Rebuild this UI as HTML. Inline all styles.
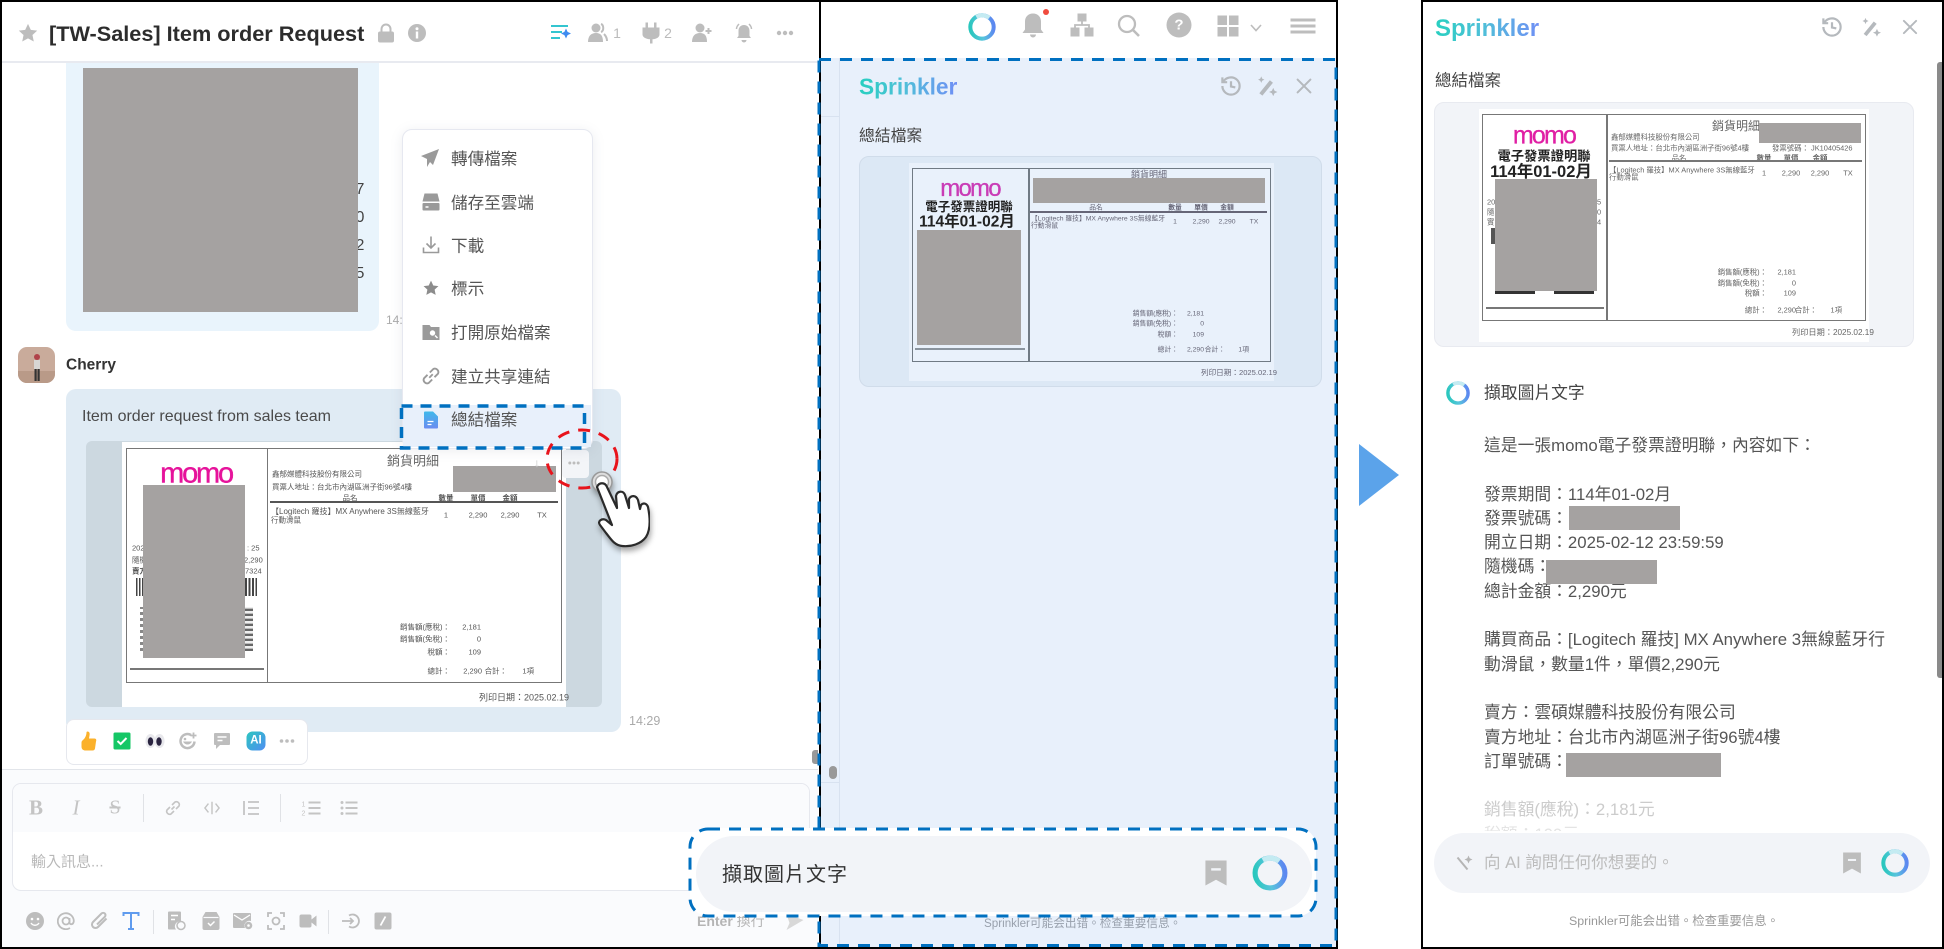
<!DOCTYPE html>
<html lang="zh-Hant">
<head>
<meta charset="utf-8">
<title>Sprinkler</title>
<style>
html,body{margin:0;padding:0;background:#fff}
body{position:relative;width:1944px;height:949px;overflow:hidden;font-family:"Liberation Sans","Noto Sans CJK TC",sans-serif;color:#444}
.a{position:absolute}
.c,.t,.r{position:absolute;white-space:nowrap;line-height:1}
.c{transform:translate(-50%,-50%)}
.t{transform:translateY(-50%);margin-top:1px}
.r{transform:translate(-100%,-50%);margin-top:1px}
svg.c{display:block}
.g{background:#a5a2a1;position:absolute}
.spr{background:linear-gradient(90deg,#27cfc0,#4fc0d8 45%,#6f8ff5);-webkit-background-clip:text;background-clip:text;color:transparent}
.mi{font-size:16.6px;color:#555}
.s1{font-size:7.5px;color:#555}
.s2{font-size:6.8px;color:#667}
.s3{font-size:7.4px;color:#666}
.ln{position:absolute;background:#777}
.gi{fill:#bdbdbd}
.gs{fill:none;stroke:#bdbdbd;stroke-width:2;stroke-linecap:round;stroke-linejoin:round}
</style>
</head>
<body>
<svg width="0" height="0" style="position:absolute">
<defs>
<linearGradient id="rg" x1="0" y1="0.7" x2="1" y2="0.55">
<stop offset="0" stop-color="#29c7bd"/><stop offset=".5" stop-color="#58c4dc"/><stop offset="1" stop-color="#5c88f0"/>
</linearGradient>
<linearGradient id="dg" x1="0" y1="0" x2="0" y2="1">
<stop offset="0" stop-color="#3fb8ea"/><stop offset="1" stop-color="#6b8cf0"/>
</linearGradient>
<symbol id="ring" viewBox="0 0 36 36">
<circle cx="18" cy="18" r="14.5" fill="none" stroke="url(#rg)" stroke-width="5"/>
<path d="M11 5.500A14.500 14.500 0 0 1 27 6.500" fill="none" stroke="#c4ebf2" stroke-width="5"/>
</symbol>
<symbol id="hist" viewBox="0 0 24 24">
<path d="M3 12a9 9 0 1 0 9-9 9.750 9.750 0 0 0-6.740 2.740L3 8" fill="none" stroke="#b5b9bd" stroke-width="2.300"/>
<path d="M3 3v5h5" fill="none" stroke="#b5b9bd" stroke-width="2.300"/>
<path d="M12 7v5.500l4.500 1" fill="none" stroke="#b5b9bd" stroke-width="2.300"/>
</symbol>
<symbol id="wand" viewBox="0 0 24 24">
<path d="M4 19.500L15 6l3.200 2.600L7.200 22z" fill="#b5b9bd"/>
<path d="M18.500 14l1.400 3 3 1.200-3 1.300-1.400 3-1.400-3-3-1.300 3-1.200zM6 2l1 2.300L9.300 5.400 7 6.500 6 8.800 5 6.500 2.700 5.400 5 4.300z" fill="#b5b9bd"/>
</symbol>
<symbol id="xx" viewBox="0 0 24 24">
<path d="M5 5l14 14M19 5L5 19" fill="none" stroke="#b5b9bd" stroke-width="2.200" stroke-linecap="round"/>
</symbol>
<symbol id="book" viewBox="0 0 22 26">
<path d="M0 0h22v26l-11-6-11 6z" fill="#bdbdbd"/><rect x="6" y="8" width="10" height="2.500" fill="#f2f4f8"/>
</symbol>
</defs>
</svg>

<!-- LEFT CHAT PANEL -->
<div class="a" style="left:0;top:0;width:820px;height:949px;background:#fff"></div>
<svg class="c" style="left:28px;top:33px" width="21" height="21" viewBox="0 0 24 24"><path class="gi" d="M12 1.500l3.200 6.900 7.300.9-5.400 5 1.500 7.400L12 18.100l-6.600 3.600 1.500-7.400-5.400-5 7.300-.9z"/></svg>
<div class="t" style="left:49px;top:33px;font-size:21.700px;font-weight:bold;color:#2c2c2c">[TW-Sales] Item order Request</div>
<svg class="c" style="left:386px;top:33px" width="18" height="20" viewBox="0 0 18 20"><path d="M4.500 9V6a4.500 4.500 0 0 1 9 0v3" fill="none" stroke="#bdbdbd" stroke-width="2"/><rect x="1" y="8.500" width="16" height="11" rx="2" fill="#bdbdbd"/></svg>
<svg class="c" style="left:417px;top:33px" width="18" height="18" viewBox="0 0 18 18"><circle cx="9" cy="9" r="9" fill="#bdbdbd"/><rect x="7.800" y="7.500" width="2.400" height="7" fill="#fff"/><circle cx="9" cy="4.800" r="1.500" fill="#fff"/></svg>
<svg class="c" style="left:561px;top:33px" width="20" height="18" viewBox="0 0 20 18"><rect x="0" y="1" width="17" height="2" fill="#33c5d0"/><rect x="0" y="7" width="11" height="2" fill="#33c5d0"/><rect x="0" y="13" width="9" height="2" fill="#33c5d0"/><path d="M15 4.500l1.600 3.400 3.400 1.600-3.400 1.600L15 14.500l-1.600-3.400L10 9.500l3.400-1.600z" fill="#3f8cf0"/></svg>
<svg class="c" style="left:598px;top:33px" width="20" height="20" viewBox="0 0 20 20"><circle cx="8" cy="5" r="4.500" class="gi"/><path class="gi" d="M0 19c0-6 3-9 8-9s7 3 7 9z"/><path d="M13 1c3 1 3 7 0 8M16 11c2 2 3 4 3 7" fill="none" stroke="#bdbdbd" stroke-width="2"/></svg>
<div class="c" style="left:617px;top:33px;font-size:14px;color:#bbb">1</div>
<svg class="c" style="left:651px;top:33px" width="17" height="21" viewBox="0 0 17 21"><path class="gi" d="M3 0h2.500v5h6V0H14v5h3v7c0 2.500-2.500 4.500-7 4.800V21H7.500v-4.200C3 16.500 0 14.500 0 12V5h3z"/></svg>
<div class="c" style="left:668px;top:33px;font-size:14px;color:#bbb">2</div>
<svg class="c" style="left:702px;top:33px" width="20" height="20" viewBox="0 0 20 20"><circle cx="8" cy="5" r="4.500" class="gi"/><path class="gi" d="M0 19c0-6 3-9 8-9s7 3 7 9z"/><path d="M16.500 5v6M13.500 8h6" stroke="#bdbdbd" stroke-width="2"/></svg>
<svg class="c" style="left:744px;top:33px" width="21" height="20" viewBox="0 0 21 20"><path class="gi" d="M10.500 2c3.500 0 5.500 2.500 5.500 6v5l1.500 2H3.500L5 13V8c0-3.500 2-6 5.500-6zM8 17h5a2.500 2.500 0 0 1-5 0z"/><path d="M3 6c0-2 1-3.500 2.500-5M18 6c0-2-1-3.500-2.500-5" fill="none" stroke="#bdbdbd" stroke-width="1.500"/></svg>
<svg class="c" style="left:785px;top:33px" width="17" height="5" viewBox="0 0 17 5"><circle cx="2.500" cy="2.500" r="2.200" class="gi"/><circle cx="8.500" cy="2.500" r="2.200" class="gi"/><circle cx="14.500" cy="2.500" r="2.200" class="gi"/></svg>
<div class="a" style="left:2px;top:61px;width:816px;height:2px;background:#e8eaf0"></div>

<!-- first bubble -->
<div class="a" style="left:66px;top:63px;width:313px;height:268px;background:#e9f4fc;border-radius:0 0 10px 10px"></div>
<div class="c" style="left:360px;top:190px;font-size:16px;color:#444">7</div>
<div class="c" style="left:360px;top:218px;font-size:16px;color:#444">0</div>
<div class="c" style="left:360px;top:246px;font-size:16px;color:#444">2</div>
<div class="c" style="left:360px;top:274px;font-size:16px;color:#444">5</div>
<div class="g" style="left:83px;top:68px;width:275px;height:244px"></div>
<div class="t" style="left:386px;top:319px;font-size:12px;color:#aaa">14:</div>

<!-- Cherry -->
<svg class="a" style="left:18px;top:347px;border-radius:9px" width="37" height="36" viewBox="0 0 37 36"><rect width="37" height="36" fill="#c9ab9b"/><rect y="24" width="37" height="12" fill="#b99a88"/><circle cx="19" cy="10" r="3" fill="#b0424a"/><rect x="16" y="13" width="6" height="9" fill="#d8d6d4"/><rect x="16.500" y="22" width="2.200" height="12" fill="#333"/><rect x="19.500" y="22" width="2.200" height="12" fill="#333"/></svg>
<div class="t" style="left:66px;top:364px;font-size:15.500px;font-weight:bold;color:#333">Cherry</div>

<!-- second bubble -->
<div class="a" style="left:66px;top:389px;width:555px;height:343px;background:#e0ebf4;border-radius:10px"></div>
<div class="t" style="left:82px;top:416px;font-size:16px;color:#4a4a4a">Item order request from sales team</div>
<div class="a" style="left:86px;top:441px;width:516px;height:266px;background:#ccd8e0;border-radius:6px"></div>
<div class="a" style="left:122px;top:442px;width:444px;height:265px;background:#fff"></div>
<div class="a" style="left:126px;top:448px;width:434px;height:233px;border:1.500px solid #777"></div>
<div class="ln" style="left:267px;top:448px;width:1px;height:234px"></div>
<div class="c" style="left:196px;top:474px;font-size:29px;letter-spacing:-2.200px;color:#e6139b;-webkit-text-stroke:.4px #e6139b">momo</div>
<div class="c" style="left:413px;top:461px;font-size:13px;color:#666">銷貨明細</div>
<div class="t s1" style="left:272px;top:473px">鑫郁媒體科技股份有限公司</div>
<div class="t s1" style="left:272px;top:486px">買票人地址：台北市內湖區洲子街96號4樓</div>
<div class="c s1" style="left:350px;top:498px">品名</div>
<div class="c s1" style="left:446px;top:498px;font-weight:bold">數量</div>
<div class="c s1" style="left:478px;top:498px;font-weight:bold">單價</div>
<div class="c s1" style="left:510px;top:498px;font-weight:bold">金額</div>
<div class="ln" style="left:270px;top:501px;width:288px;height:1.500px;background:#555"></div>
<div class="t s1" style="left:271px;top:511px;font-size:8px">【Logitech 羅技】MX Anywhere 3S無線藍牙</div>
<div class="t s1" style="left:271px;top:519px">行動滑鼠</div>
<div class="c s1" style="left:446px;top:515px">1</div>
<div class="c s1" style="left:478px;top:515px">2,290</div>
<div class="c s1" style="left:510px;top:515px">2,290</div>
<div class="c s1" style="left:542px;top:515px">TX</div>
<div class="r s1" style="left:450px;top:626px">銷售額(應稅)：</div><div class="r s1" style="left:481px;top:626px">2,181</div>
<div class="r s1" style="left:450px;top:638px">銷售額(免稅)：</div><div class="r s1" style="left:481px;top:638px">0</div>
<div class="r s1" style="left:450px;top:651px">稅額：</div><div class="r s1" style="left:481px;top:651px">109</div>
<div class="r s1" style="left:450px;top:670px">總計：</div><div class="r s1" style="left:482px;top:670px">2,290</div><div class="r s1" style="left:507px;top:670px">合計：</div><div class="r s1" style="left:534px;top:670px">1項</div>
<div class="t s1" style="left:479px;top:697px;font-size:9px">列印日期：2025.02.19</div>
<div class="t s1" style="left:132px;top:547px">2025</div><div class="t s1" style="left:247px;top:547px">: 25</div>
<div class="t s1" style="left:132px;top:559px">隨機</div><div class="t s1" style="left:244px;top:559px">2,290</div>
<div class="t s1" style="left:132px;top:570px;font-weight:bold">賣方</div><div class="t s1" style="left:245px;top:570px">7324</div>
<div class="a" style="left:136px;top:578px;width:7px;height:18px;background:repeating-linear-gradient(90deg,#444 0 1.500px,#fff 1.500px 3px)"></div>
<div class="a" style="left:245px;top:578px;width:12px;height:18px;background:repeating-linear-gradient(90deg,#444 0 2px,#fff 2px 3.500px)"></div>
<div class="a" style="left:245px;top:607px;width:8px;height:44px;background:repeating-linear-gradient(0deg,#666 0 2px,#bbb 2px 3px,#eee 3px 5px)"></div>
<div class="a" style="left:140px;top:607px;width:3px;height:44px;background:repeating-linear-gradient(0deg,#888 0 3px,#fff 3px 6px)"></div>
<div class="ln" style="left:130px;top:668px;width:134px;height:1.500px"></div>
<div class="g" style="left:143px;top:485px;width:102px;height:173px"></div>
<div class="g" style="left:453px;top:466px;width:103px;height:26px"></div>
<div class="c" style="left:537px;top:463px;font-size:12px;color:#bbb">↓</div>
<div class="a" style="left:562px;top:450px;width:27px;height:28px;background:#f3f5f8;border-radius:4px"></div>
<svg class="c" style="left:574px;top:463px" width="12" height="4" viewBox="0 0 12 4"><circle cx="1.800" cy="2" r="1.500" class="gi"/><circle cx="6" cy="2" r="1.500" class="gi"/><circle cx="10.200" cy="2" r="1.500" class="gi"/></svg>
<div class="t" style="left:629px;top:720px;font-size:12.500px;color:#aaa">14:29</div>

<!-- reaction bar -->
<div class="a" style="left:66px;top:719px;width:240px;height:44px;background:#fff;border:1px solid #e6e8ee;border-radius:8px"></div>
<svg class="c" style="left:89px;top:741px" width="15" height="19" viewBox="0 0 15 19"><path fill="#fbb12b" d="M6 0c2 0 2.500 2 2 4L7.500 7H13c2 0 2 2 1.500 3l-1 7c-.3 1.200-1 2-2.500 2H4c-2 0-4-1-4-4v-4c0-1.500 1-2 2.500-3.500C4 6 5 3 5 1c0-.6.400-1 1-1z"/></svg>
<svg class="c" style="left:122px;top:741px" width="17" height="17" viewBox="0 0 17 17"><rect width="17" height="17" rx="1.500" fill="#15c766"/><path d="M4 8.500l3.200 3L13 5.500" fill="none" stroke="#fff" stroke-width="2"/></svg>
<svg class="c" style="left:155px;top:741px" width="19" height="15" viewBox="0 0 19 15"><ellipse cx="5" cy="7.500" rx="5" ry="7" fill="#e8e8ec"/><ellipse cx="14" cy="7.500" rx="5" ry="7" fill="#e8e8ec"/><ellipse cx="5" cy="8" rx="2.700" ry="4.300" fill="#2a2440"/><ellipse cx="13.500" cy="8" rx="2.700" ry="4.300" fill="#2a2440"/></svg>
<svg class="c" style="left:188px;top:741px" width="18" height="17" viewBox="0 0 18 17"><path d="M12 2.500A7 7 0 1 0 15.500 9" fill="none" stroke="#bdbdbd" stroke-width="2.500"/><path d="M4 9c2 4 7 4 9 0z" class="gi"/><circle cx="6" cy="6.500" r="1.300" class="gi"/><path d="M14.500 0v6M11.500 3h6" stroke="#bdbdbd" stroke-width="1.800"/></svg>
<svg class="c" style="left:222px;top:741px" width="16" height="16" viewBox="0 0 16 16"><path class="gi" d="M1 0h14a1 1 0 0 1 1 1v10a1 1 0 0 1-1 1H6l-4 4v-4H1a1 1 0 0 1-1-1V1a1 1 0 0 1 1-1z"/><path d="M3.500 4h9M3.500 7.500h5" stroke="#fff" stroke-width="1.500"/></svg>
<div class="c" style="left:256px;top:741px;width:19px;height:19px;border-radius:6px;background:linear-gradient(135deg,#2cc6c0,#4f8df2);color:#fff;font-size:11.500px;font-weight:bold;line-height:19px;text-align:center">AI</div>
<svg class="c" style="left:287px;top:741px" width="15" height="4" viewBox="0 0 15 4"><circle cx="2" cy="2" r="1.800" class="gi"/><circle cx="7.500" cy="2" r="1.800" class="gi"/><circle cx="13" cy="2" r="1.800" class="gi"/></svg>

<!-- input area -->
<div class="a" style="left:2px;top:769px;width:816px;height:178px;background:#fafbfd;border-top:1.500px solid #e2e5ea;box-sizing:border-box"></div>
<div class="a" style="left:12px;top:783px;width:798px;height:108px;background:#fff;border:1.500px solid #e6e8ee;border-radius:9px;overflow:hidden;box-sizing:border-box"><div style="height:48px;background:#fafbfd"></div></div>
<div class="c" style="left:36px;top:808px;font:bold 21px 'Liberation Serif',serif;color:#c4c4c4">B</div>
<div class="c" style="left:76px;top:808px;font:italic 21px 'Liberation Serif',serif;color:#c4c4c4">I</div>
<div class="c" style="left:115px;top:808px;font:20px 'Liberation Serif',serif;color:#c4c4c4;text-decoration:line-through">S</div>
<div class="a" style="left:143px;top:794px;width:1px;height:28px;background:#e0e2e6"></div>
<svg class="c" style="left:173px;top:808px" width="18" height="18" viewBox="0 0 18 18"><path d="M7.500 10.500l3-3M6 8l-3 3a3 3 0 0 0 4 4l3-3M8 6l3-3a3 3 0 0 1 4 4l-3 3" fill="none" stroke="#c4c4c4" stroke-width="1.600"/></svg>
<svg class="c" style="left:212px;top:808px" width="16" height="15" viewBox="0 0 18 16"><path d="M5 3L1 8l4 5M13 3l4 5-4 5M9 1v14" fill="none" stroke="#c4c4c4" stroke-width="1.600"/></svg>
<svg class="c" style="left:251px;top:808px" width="16" height="14" viewBox="0 0 16 14"><path d="M1 0v14M5 1h11M5 7h11M5 13h11" stroke="#c4c4c4" stroke-width="1.800"/></svg>
<div class="a" style="left:280px;top:794px;width:1px;height:28px;background:#e0e2e6"></div>
<svg class="c" style="left:311px;top:808px" width="19" height="15" viewBox="0 0 19 15"><path d="M7 2h12M7 7.500h12M7 13h12" stroke="#c4c4c4" stroke-width="2"/><text x="0" y="6" font-size="7" fill="#c4c4c4" font-family="Liberation Sans">1</text><text x="0" y="15" font-size="7" fill="#c4c4c4" font-family="Liberation Sans">2</text></svg>
<svg class="c" style="left:349px;top:808px" width="17" height="14" viewBox="0 0 17 14"><path d="M5 1.500h12M5 7h12M5 12.500h12" stroke="#c4c4c4" stroke-width="2"/><circle cx="1.500" cy="1.500" r="1.500" fill="#c4c4c4"/><circle cx="1.500" cy="7" r="1.500" fill="#c4c4c4"/><circle cx="1.500" cy="12.500" r="1.500" fill="#c4c4c4"/></svg>
<div class="t" style="left:31px;top:861px;font-size:15px;color:#b8b8b8">輸入訊息...</div>

<svg class="c" style="left:35px;top:921px" width="18" height="18" viewBox="0 0 18 18"><circle cx="9" cy="9" r="9" class="gi"/><circle cx="6" cy="7" r="1.300" fill="#fff"/><circle cx="12" cy="7" r="1.300" fill="#fff"/><path d="M5 11c2 3 6 3 8 0" fill="none" stroke="#fff" stroke-width="1.400"/></svg>
<svg class="c" style="left:66px;top:921px" width="18" height="18" viewBox="0 0 18 18"><circle cx="9" cy="9" r="3.500" fill="none" stroke="#bdbdbd" stroke-width="1.800"/><path d="M12.500 6v4.500c0 2.500 4 2.500 4.300-1.500A8 8 0 1 0 13 16" fill="none" stroke="#bdbdbd" stroke-width="1.800"/></svg>
<svg class="c" style="left:99px;top:921px" width="19" height="19" viewBox="0 0 19 19"><path d="M17 7l-8.500 8.500a3.500 3.500 0 0 1-5-5L12 2a2.300 2.300 0 0 1 3.300 3.300L7.500 13" fill="none" stroke="#bdbdbd" stroke-width="2"/></svg>
<svg class="c" style="left:131px;top:921px" width="17" height="18" viewBox="0 0 17 18"><path d="M1 4V1h15v3M8.500 1v16M5.500 17h6" fill="none" stroke="#5f9bee" stroke-width="2"/></svg>
<div class="a" style="left:153px;top:910px;width:1px;height:24px;background:#e0e2e6"></div>
<svg class="c" style="left:177px;top:921px" width="18" height="19" viewBox="0 0 18 19"><path class="gi" d="M1 0h11a1 1 0 0 1 1 1v9a5 5 0 0 0-5 8H1a1 1 0 0 1-1-1V1a1 1 0 0 1 1-1z"/><path d="M3 4h7M3 8h4" stroke="#fff" stroke-width="1.500"/><circle cx="13" cy="14" r="4" fill="none" stroke="#bdbdbd" stroke-width="1.500"/></svg>
<svg class="c" style="left:211px;top:921px" width="17" height="18" viewBox="0 0 17 18"><path class="gi" d="M3 0h11l3 5v11a2 2 0 0 1-2 2H2a2 2 0 0 1-2-2V5z"/><path d="M1 5.500h15" stroke="#fafbfd" stroke-width="1.200"/><path d="M5.500 11l2.500 2.500 4-4" fill="none" stroke="#fff" stroke-width="1.500"/></svg>
<svg class="c" style="left:243px;top:921px" width="20" height="18" viewBox="0 0 20 18"><path class="gi" d="M1 1h16a1 1 0 0 1 1 1v7a5 5 0 0 0-6 7H1a1 1 0 0 1-1-1V2a1 1 0 0 1 1-1z"/><path d="M1 3l8 5 8-5" fill="none" stroke="#fff" stroke-width="1.300"/><circle cx="15.500" cy="13.500" r="3.800" class="gi"/><circle cx="15.500" cy="13.500" r="1.300" fill="#fff"/></svg>
<svg class="c" style="left:276px;top:921px" width="18" height="18" viewBox="0 0 18 18"><path d="M1 5V1h4M13 1h4v4M17 13v4h-4M5 17H1v-4" fill="none" stroke="#bdbdbd" stroke-width="1.800"/><circle cx="9" cy="9" r="3.500" fill="none" stroke="#bdbdbd" stroke-width="1.800"/></svg>
<svg class="c" style="left:308px;top:921px" width="17" height="13" viewBox="0 0 17 13"><rect y="0" width="12" height="13" rx="2" class="gi"/><path class="gi" d="M12 5l5-4v11l-5-4z"/></svg>
<div class="a" style="left:328px;top:910px;width:1px;height:24px;background:#e0e2e6"></div>
<svg class="c" style="left:351px;top:921px" width="18" height="16" viewBox="0 0 18 16"><path d="M0 8h11M8 5l3 3-3 3" fill="none" stroke="#bdbdbd" stroke-width="1.800"/><path d="M7 2.500a6.500 6.500 0 1 1 0 11" fill="none" stroke="#bdbdbd" stroke-width="1.800"/></svg>
<svg class="c" style="left:383px;top:921px" width="17" height="17" viewBox="0 0 17 17"><rect width="17" height="17" rx="2" class="gi"/><path d="M11 4L6 13" stroke="#fff" stroke-width="1.800"/></svg>
<div class="t" style="left:697px;top:920px;font-size:14px;color:#b5b5b5"><b>Enter</b> 換行</div>
<svg class="c" style="left:795px;top:922px" width="17" height="16" viewBox="0 0 17 16"><path d="M0 0l17 6L0 16l3-7z" fill="#d8d8d8"/></svg>

<!-- TOP BAR of middle -->
<div class="a" style="left:820px;top:2px;width:516px;height:56px;background:#fff"></div>
<svg class="c" style="left:982px;top:27px" width="29" height="29"><use href="#ring"/></svg>
<svg class="c" style="left:1033px;top:26px" width="21" height="25" viewBox="0 0 21 25"><path d="M10.500 0c5 0 8 3.500 8 8v8l2.500 3.500H0L2.500 16V8c0-4.500 3-8 8-8zM7.500 21h6a3 3 0 0 1-6 0z" fill="#bdbdbd"/></svg>
<div class="a" style="left:1043px;top:9px;width:6px;height:6px;background:#f04b3e;border-radius:50%"></div>
<svg class="c" style="left:1082px;top:25px" width="23" height="23" viewBox="0 0 23 23"><rect x="7" y="0" width="9" height="8" class="gi"/><rect x="0" y="14" width="9" height="9" class="gi"/><rect x="14" y="14" width="9" height="9" class="gi"/><path d="M11.500 8v4M4.500 14v-2.500h14V14" fill="none" stroke="#bdbdbd" stroke-width="1.800"/></svg>
<svg class="c" style="left:1129px;top:26px" width="23" height="23" viewBox="0 0 23 23"><circle cx="9.500" cy="9.500" r="8" fill="none" stroke="#bdbdbd" stroke-width="2.300"/><path d="M15.500 15.500l6 6" stroke="#bdbdbd" stroke-width="2.600"/></svg>
<div class="c" style="left:1179px;top:25px;width:25px;height:25px;border-radius:50%;background:#bdbdbd;color:#fff;font-size:15px;font-weight:bold;line-height:25px;text-align:center">?</div>
<svg class="c" style="left:1228px;top:26px" width="21" height="21" viewBox="0 0 21 21"><rect width="9.500" height="9.500" class="gi"/><rect x="11.500" width="9.500" height="9.500" class="gi"/><rect y="11.500" width="9.500" height="9.500" class="gi"/><rect x="11.500" y="11.500" width="9.500" height="9.500" class="gi"/></svg>
<svg class="c" style="left:1256px;top:28px" width="12" height="8" viewBox="0 0 12 8"><path d="M1 1l5 5.500L11 1" fill="none" stroke="#bdbdbd" stroke-width="1.600"/></svg>
<svg class="c" style="left:1303px;top:26px" width="25" height="16" viewBox="0 0 25 16"><path d="M0 2h25M0 8h25M0 14h25" stroke="#bdbdbd" stroke-width="3"/></svg>

<!-- BLUE PANEL -->
<div class="a" style="left:819px;top:58px;width:517px;height:889px;background:#e8f0fb"></div>
<div class="a" style="left:839px;top:58px;width:1px;height:889px;background:#d8e2f0"></div>
<div class="a" style="left:820px;top:116px;width:19px;height:1px;background:#d8e2f0"></div>
<div class="a" style="left:820px;top:782px;width:19px;height:1px;background:#d8e2f0"></div>
<div class="a" style="left:829px;top:766px;width:8px;height:13px;background:#999;border-radius:4px"></div>
<div class="a" style="left:812px;top:750px;width:6px;height:14px;background:#999;border-radius:3px 0 0 3px"></div>
<div class="t spr" style="left:859px;top:86px;font-size:22.700px;font-weight:bold">Sprinkler</div>
<svg class="c" style="left:1231px;top:86px" width="23" height="23"><use href="#hist"/></svg>
<svg class="c" style="left:1267px;top:86px" width="23" height="23"><use href="#wand"/></svg>
<svg class="c" style="left:1304px;top:86px" width="22" height="22"><use href="#xx"/></svg>
<div class="t" style="left:859px;top:136px;font-size:15.800px;color:#444">總結檔案</div>
<div class="a" style="left:859px;top:156px;width:463px;height:231px;background:#dce8f5;border:1px solid #d0dcea;border-radius:10px;box-sizing:border-box"></div>
<div class="a" style="left:909px;top:163px;width:365px;height:218px;background:#e9f1fb"></div>
<div class="a" style="left:912px;top:168px;width:357px;height:192px;border:1.500px solid #707a84"></div>
<div class="ln" style="left:1028px;top:168px;width:1.500px;height:193px;background:#707a84"></div>
<div class="c" style="left:970px;top:189px;font-size:24px;letter-spacing:-1.800px;color:#c93cb6;-webkit-text-stroke:.3px #c93cb6">momo</div>
<div class="c" style="left:969px;top:207px;font-size:12.500px;font-weight:bold;color:#222">電子發票證明聯</div>
<div class="c" style="left:967px;top:222px;font-size:15.500px;font-weight:bold;color:#222">114年01-02月</div>
<div class="c s2" style="left:1149px;top:175px;font-size:9px">銷貨明細</div>
<div class="c s2" style="left:1096px;top:209px">品名</div>
<div class="c s2" style="left:1175px;top:209px;font-weight:bold">數量</div>
<div class="c s2" style="left:1201px;top:209px;font-weight:bold">單價</div>
<div class="c s2" style="left:1227px;top:209px;font-weight:bold">金額</div>
<div class="ln" style="left:1030px;top:211px;width:237px;height:1.500px;background:#667"></div>
<div class="t s2" style="left:1031px;top:219px">【Logitech 羅技】MX Anywhere 3S無線藍牙</div>
<div class="t s2" style="left:1031px;top:226px">行動滑鼠</div>
<div class="c s2" style="left:1175px;top:223px">1</div>
<div class="c s2" style="left:1201px;top:223px">2,290</div>
<div class="c s2" style="left:1227px;top:223px">2,290</div>
<div class="c s2" style="left:1254px;top:223px">TX</div>
<div class="r s2" style="left:1178px;top:314px">銷售額(應稅)：</div><div class="r s2" style="left:1204px;top:314px">2,181</div>
<div class="r s2" style="left:1178px;top:324px">銷售額(免稅)：</div><div class="r s2" style="left:1204px;top:324px">0</div>
<div class="r s2" style="left:1178px;top:335px">稅額：</div><div class="r s2" style="left:1204px;top:335px">109</div>
<div class="r s2" style="left:1178px;top:350px">總計：</div><div class="r s2" style="left:1204px;top:350px">2,290</div><div class="r s2" style="left:1225px;top:350px">合計：</div><div class="r s2" style="left:1249px;top:350px">1項</div>
<div class="t s2" style="left:1201px;top:372px;font-size:7.600px">列印日期：2025.02.19</div>
<div class="ln" style="left:915px;top:348px;width:110px;height:1.500px;background:#8a949e"></div>
<div class="g" style="left:917px;top:230px;width:104px;height:115px"></div>
<div class="g" style="left:1033px;top:178px;width:232px;height:25px"></div>
<div class="t" style="left:984px;top:923px;font-size:11.650px;color:#98a0ac">Sprinkler可能会出错。检查重要信息。</div>

<!-- blue dashed panel border + black frame -->
<div class="a" style="left:0;top:0;width:1338px;height:2px;background:#000"></div>
<div class="a" style="left:0;top:947px;width:1338px;height:2px;background:#000"></div>
<div class="a" style="left:0;top:0;width:2px;height:949px;background:#000"></div>
<div class="a" style="left:819px;top:0;width:2px;height:949px;background:#000"></div>
<div class="a" style="left:1336px;top:0;width:2px;height:949px;background:#000"></div>
<svg class="a" style="left:0;top:0" width="1944" height="949"><rect x="819" y="59.500" width="517" height="886" fill="none" stroke="#0070c0" stroke-width="3" stroke-dasharray="12 9"/></svg>

<!-- MENU -->
<div class="a" style="left:402px;top:129px;width:191px;height:320px;background:#fff;border:1.500px solid #e6e8f0;border-radius:10px;box-sizing:border-box;box-shadow:0 2px 12px rgba(120,130,150,.14);overflow:hidden"></div>
<svg class="c" style="left:430px;top:158px" width="18" height="18" viewBox="0 0 18 18"><path d="M18 0L0 7l6 3v8l3-5 3 3z" fill="#9a9a9a"/></svg>
<div class="t mi" style="left:451px;top:159px">轉傳檔案</div>
<svg class="c" style="left:431px;top:202px" width="17" height="17" viewBox="0 0 17 17"><path d="M2 0h13l2 8H0z" fill="#9a9a9a"/><rect y="9.500" width="17" height="7.500" rx="1" fill="#9a9a9a"/><path d="M3 13.500h3" stroke="#fff" stroke-width="1.500"/></svg>
<div class="t mi" style="left:451px;top:203px">儲存至雲端</div>
<svg class="c" style="left:431px;top:245px" width="17" height="17" viewBox="0 0 17 17"><path d="M8.500 0v11M4 7l4.500 4.500L13 7M1 11v5h15v-5" fill="none" stroke="#9a9a9a" stroke-width="1.600"/></svg>
<div class="t mi" style="left:451px;top:246px">下載</div>
<svg class="c" style="left:431px;top:288px" width="17" height="17" viewBox="0 0 24 24"><path fill="#8c8c8c" d="M12 1.500l3.200 6.900 7.300.9-5.400 5 1.500 7.400L12 18.100l-6.600 3.600 1.500-7.400-5.400-5 7.300-.9z"/></svg>
<div class="t mi" style="left:451px;top:289px">標示</div>
<svg class="c" style="left:431px;top:332px" width="17" height="16" viewBox="0 0 17 16"><path d="M0 1h7l1.500 2H17v13H0z" fill="#9a9a9a"/><circle cx="10" cy="9" r="3.300" fill="#fff" stroke="#9a9a9a" stroke-width="1.200"/><path d="M12.500 11.500l2.500 2.500" stroke="#fff" stroke-width="1.500"/></svg>
<div class="t mi" style="left:451px;top:333px">打開原始檔案</div>
<svg class="c" style="left:431px;top:376px" width="22" height="21" viewBox="0 0 18 18"><path d="M7.500 10.500l3-3M6 8l-3 3a3 3 0 0 0 4 4l3-3M8 6l3-3a3 3 0 0 1 4 4l-3 3" fill="none" stroke="#9a9a9a" stroke-width="1.600"/></svg>
<div class="t mi" style="left:451px;top:377px">建立共享連結</div>
<div class="a" style="left:403px;top:405px;width:188px;height:42px;background:#e8f0fb"></div>
<svg class="c" style="left:431px;top:420px" width="14" height="17" viewBox="0 0 14 17"><path d="M1 0h8l5 5v11a1 1 0 0 1-1 1H1a1 1 0 0 1-1-1V1a1 1 0 0 1 1-1z" fill="url(#dg)"/><path d="M3.500 10h6M3.500 13h4" stroke="#fff" stroke-width="1.200"/></svg>
<div class="t mi" style="left:451px;top:420px">總結檔案</div>
<svg class="a" style="left:0;top:0" width="1944" height="949"><rect x="401.500" y="406" width="183" height="42" fill="none" stroke="#0070c0" stroke-width="3.500" stroke-dasharray="11 8"/>
<ellipse cx="582" cy="459" rx="35" ry="29" fill="none" stroke="#e8141c" stroke-width="3" stroke-dasharray="12 9"/></svg>
<!-- hand -->
<svg class="a" style="left:520px;top:392px;filter:drop-shadow(1px 4px 3px rgba(0,0,0,.35))" width="130" height="160" viewBox="0 0 130 160">
<circle cx="82" cy="90" r="10" fill="#ddd" stroke="#999" stroke-width="1.500"/><circle cx="82" cy="90" r="6.500" fill="#fff" stroke="#aaa" stroke-width="1.500"/>
<path d="M77 95c2-5 8-5 10 0l10 21-1-12c1-5 7-6 9-1l4 13v-9c2-4 7-4 9 1l2 9 1-4c3-3 6-1 7 2 2 10 3 22-2 30-5 7-15 10-24 9-8-1-11-7-16-13l-6-8c-3-4 2-7 6-5l6 5z" fill="#fff" stroke="#2a2a2a" stroke-width="2.200" stroke-linejoin="round"/>
</svg>

<!-- OVERLAY INPUT -->
<div class="a" style="left:690px;top:828px;width:626px;height:88px;background:#fff;border-radius:18px"></div>
<div class="a" style="left:696px;top:836px;width:616px;height:76px;background:#f2f4f8;border-radius:38px"></div>
<svg class="a" style="left:0;top:0" width="1944" height="949"><rect x="690" y="829" width="626" height="87" rx="18" fill="none" stroke="#0070c0" stroke-width="3" stroke-dasharray="12 9"/></svg>
<div class="t" style="left:722px;top:874px;font-size:20px;letter-spacing:1px;color:#333">擷取圖片文字</div>
<svg class="c" style="left:1216px;top:873px" width="22" height="25"><use href="#book"/></svg>
<svg class="c" style="left:1270px;top:873px" width="37" height="37"><use href="#ring"/></svg>

<!-- ARROW -->
<svg class="a" style="left:1359px;top:444px" width="40" height="62" viewBox="0 0 40 62"><path d="M0 0l40 31L0 62z" fill="#5ba3ea"/></svg>

<!-- RIGHT PANEL -->
<div class="a" style="left:1421px;top:0;width:523px;height:949px;border:2px solid #000;box-sizing:border-box;background:#fff"></div>
<div class="a" style="left:1937px;top:62px;width:5px;height:616px;background:#8a8a8a;border-radius:3px 0 0 3px"></div>
<div class="t spr" style="left:1435px;top:28px;font-size:24px;font-weight:bold">Sprinkler</div>
<svg class="c" style="left:1832px;top:27px" width="23" height="23"><use href="#hist"/></svg>
<svg class="c" style="left:1871px;top:27px" width="22" height="22"><use href="#wand"/></svg>
<svg class="c" style="left:1910px;top:27px" width="21" height="21"><use href="#xx"/></svg>
<div class="t" style="left:1435px;top:80px;font-size:16.500px;color:#444">總結檔案</div>
<div class="a" style="left:1434px;top:102px;width:480px;height:245px;background:#f2f4f8;border:1px solid #e8eaf0;border-radius:10px;box-sizing:border-box"></div>
<div class="a" style="left:1479px;top:109px;width:390px;height:233px;background:#fff"></div>
<div class="a" style="left:1482px;top:114px;width:382px;height:205px;border:1.500px solid #777"></div>
<div class="ln" style="left:1606px;top:114px;width:1.500px;height:206px"></div>
<div class="c" style="left:1544px;top:136px;font-size:25px;letter-spacing:-1.800px;color:#e01fa4;-webkit-text-stroke:.3px #e01fa4">momo</div>
<div class="c" style="left:1544px;top:156px;font-size:13.300px;font-weight:bold;color:#222">電子發票證明聯</div>
<div class="c" style="left:1541px;top:172px;font-size:16.500px;font-weight:bold;color:#222">114年01-02月</div>
<div class="t" style="left:1712px;top:125px;font-size:12px;color:#666">銷貨明細</div>
<div class="t s3" style="left:1611px;top:136px">鑫郁媒體科技股份有限公司</div>
<div class="t s3" style="left:1611px;top:147px">買票人地址：台北市內湖區洲子街96號4樓</div>
<div class="t s3" style="left:1772px;top:147px">發票號碼： JK10405426</div>
<div class="c s3" style="left:1679px;top:158px">品名</div>
<div class="c s3" style="left:1764px;top:158px;font-weight:bold">數量</div>
<div class="c s3" style="left:1791px;top:158px;font-weight:bold">單價</div>
<div class="c s3" style="left:1820px;top:158px;font-weight:bold">金額</div>
<div class="ln" style="left:1609px;top:160px;width:253px;height:1.500px"></div>
<div class="t s3" style="left:1609px;top:169px">【Logitech 羅技】MX Anywhere 3S無線藍牙</div>
<div class="t s3" style="left:1609px;top:176px">行動滑鼠</div>
<div class="c s3" style="left:1764px;top:173px">1</div>
<div class="c s3" style="left:1791px;top:173px">2,290</div>
<div class="c s3" style="left:1820px;top:173px">2,290</div>
<div class="c s3" style="left:1848px;top:173px">TX</div>
<div class="r s3" style="left:1767px;top:271px">銷售額(應稅)：</div><div class="r s3" style="left:1796px;top:271px">2,181</div>
<div class="r s3" style="left:1767px;top:282px">銷售額(免稅)：</div><div class="r s3" style="left:1796px;top:282px">0</div>
<div class="r s3" style="left:1767px;top:292px">稅額：</div><div class="r s3" style="left:1796px;top:292px">109</div>
<div class="r s3" style="left:1767px;top:309px">總計：</div><div class="r s3" style="left:1796px;top:309px">2,290</div><div class="r s3" style="left:1817px;top:309px">合計：</div><div class="r s3" style="left:1842px;top:309px">1項</div>
<div class="t s3" style="left:1792px;top:332px;font-size:8.200px">列印日期：2025.02.19</div>
<div class="t s3" style="left:1487px;top:201px">20</div><div class="t s3" style="left:1597px;top:201px">5</div>
<div class="t s3" style="left:1487px;top:211px">隨</div><div class="t s3" style="left:1597px;top:211px">0</div>
<div class="t s3" style="left:1487px;top:221px">實</div><div class="t s3" style="left:1597px;top:221px">4</div>
<div class="a" style="left:1491px;top:228px;width:4px;height:16px;background:#555"></div>
<div class="a" style="left:1495px;top:290px;width:40px;height:4px;background:#333"></div>
<div class="a" style="left:1554px;top:290px;width:40px;height:4px;background:#333"></div>
<div class="ln" style="left:1486px;top:307px;width:118px;height:1.500px"></div>
<div class="g" style="left:1495px;top:179px;width:102px;height:112px"></div>
<div class="g" style="left:1759px;top:123px;width:102px;height:20px"></div>

<svg class="c" style="left:1458px;top:393px" width="25" height="25"><use href="#ring"/></svg>
<div class="t" style="left:1484px;top:393px;font-size:16.800px;color:#444">擷取圖片文字</div>
<div style="position:absolute;left:1484px;top:434px;font-size:16.800px;line-height:24.300px;color:#555;white-space:nowrap">這是一張momo電子發票證明聯，內容如下：<br><br>發票期間：114年01-02月<br>發票號碼：<br>開立日期：2025-02-12 23:59:59<br>隨機碼：<br>總計金額：2,290元<br><br>購買商品：[Logitech 羅技] MX Anywhere 3無線藍牙行<br>動滑鼠，數量1件，單價2,290元<br><br>賣方：雲碩媒體科技股份有限公司<br>賣方地址：台北市內湖區洲子街96號4樓<br>訂單號碼：<br><br><span style="color:#ccc">銷售額(應稅)：2,181元</span><br><span style="color:#e4e4e4">稅額：109元</span></div>
<div class="g" style="left:1569px;top:506px;width:111px;height:24px"></div>
<div class="g" style="left:1546px;top:560px;width:111px;height:24px"></div>
<div class="g" style="left:1566px;top:753px;width:155px;height:24px"></div>
<div class="a" style="left:1423px;top:831px;width:514px;height:100px;background:#fff"></div>
<div class="a" style="left:1434px;top:833px;width:496px;height:60px;background:#f2f4f8;border-radius:30px"></div>
<svg class="c" style="left:1465px;top:863px" width="17" height="17" viewBox="0 0 17 17"><path d="M1 3l10 12" stroke="#b5b5b5" stroke-width="2"/><path d="M12 1l1.200 2.800L16 5l-2.800 1.200L12 9l-1.200-2.800L8 5l2.800-1.200z" fill="#b5b5b5"/></svg>
<div class="t" style="left:1484px;top:862px;font-size:16.500px;color:#bcbcbc">向 AI 詢問任何你想要的。</div>
<svg class="c" style="left:1852px;top:863px" width="18" height="21"><use href="#book"/></svg>
<svg class="c" style="left:1895px;top:863px" width="29" height="29"><use href="#ring"/></svg>
<div class="t" style="left:1569px;top:920px;font-size:12.400px;color:#999">Sprinkler可能会出错。检查重要信息。</div>
</body>
</html>
